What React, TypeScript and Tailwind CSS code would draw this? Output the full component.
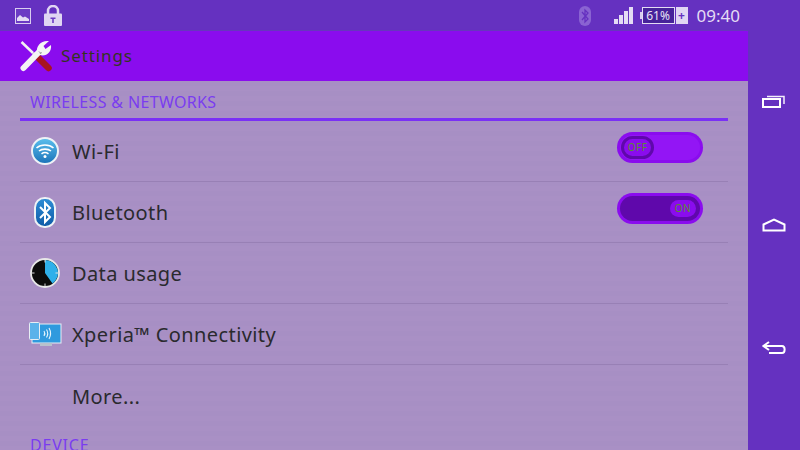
import React from "react";

const font = { fontFamily: '"Noto Sans", sans-serif' };

function Tools() {
  return (
    <svg width="32" height="32" viewBox="0 0 32 32">
      <path d="M1.500 2 L13 13" stroke="#f2f2f2" strokeWidth="2.500" fill="none" />
      <path d="M13 13 L18 18" stroke="#d8d8d8" strokeWidth="3" fill="none" />
      <path d="M18 17.500 L28.500 28" stroke="#a81420" strokeWidth="6.500" strokeLinecap="round" fill="none" />
      <path d="M3.500 28 L20 11" stroke="#f4f4f4" strokeWidth="6" strokeLinecap="round" fill="none" />
      <path d="M17 12 C16 6 21 0 29 1 L23.500 6 L25.500 9 L31 5 C32 12 26 17 20 15 Z" fill="#f4f4f4" />
      <path d="M19 11.500 L21 13.500 M20 14 L21.500 12" stroke="#9a9a9a" strokeWidth="1" />
    </svg>
  );
}

function PictureIcon() {
  return (
    <svg width="16" height="16" viewBox="0 0 16 16">
      <rect x="0.500" y="0.500" width="15" height="15" fill="#6b3bc4" stroke="#d9cdf0" />
      <path d="M2 13 V10 L5 7 L8 9.500 L10 8.500 L14 11 V13 Z" fill="#e4dcf4" />
    </svg>
  );
}

function LockIcon() {
  return (
    <svg width="18" height="21" viewBox="0 0 18 21">
      <path d="M4 9 V6 a5 5 0 0 1 10 0 V9" fill="none" stroke="#e0d6f3" strokeWidth="2.500" />
      <rect x="0" y="8.500" width="18" height="12.500" rx="1" fill="#e0d6f3" />
      <path d="M6.500 12.500 H11.500 V14 H9.800 V18 H8.200 V14 H6.500 Z" fill="#6b3bc4" />
    </svg>
  );
}

function BtStatus() {
  return (
    <svg width="12" height="20" viewBox="0 0 12 20">
      <rect width="12" height="20" rx="6" fill="#8a63d2" />
      <path d="M3 6 L9 13 L6 16 V4 L9 7 L3 14" fill="none" stroke="#6531c0" strokeWidth="1.300" />
    </svg>
  );
}

function Signal() {
  return (
    <svg width="20" height="17" viewBox="0 0 20 17">
      <path d="M0 12 H4 V17 H0 Z M5 8 H9 V17 H5 Z M10 4 H14 V17 H10 Z M15 0 H19 V17 H15 Z" fill="#e4dcf4" />
    </svg>
  );
}

function Battery() {
  return (
    <div className="flex items-center">
      <div className="w-[2px] h-[7px] bg-[#d9cdf0]" />
      <div className="w-[33px] h-[17px] border border-[#e4dcf4] bg-[#47239a] flex items-center justify-center text-[12px] leading-none text-[#e8e2f6]">
        61%
      </div>
      <div className="ml-[1px] w-[12px] h-[17px] bg-[#e0d6f3] flex items-center justify-center text-[12px] leading-none text-[#6531c0] font-bold">
        +
      </div>
    </div>
  );
}

function WifiIcon() {
  return (
    <svg width="28" height="28" viewBox="0 0 28 28">
      <defs>
        <linearGradient id="wg" x1="0" y1="0" x2="0" y2="1">
          <stop offset="0" stopColor="#5cc0ee" />
          <stop offset="1" stopColor="#1a72b8" />
        </linearGradient>
      </defs>
      <circle cx="14" cy="14" r="13" fill="url(#wg)" stroke="#eef2f6" strokeWidth="2" />
      <path d="M5.500 11 C10 7 18 7 22.500 11 M8 14 C11 11.500 17 11.500 20 14 M10.500 16.800 C12.500 15.300 15.500 15.300 17.500 16.800" fill="none" stroke="#fff" strokeWidth="1.600" />
      <circle cx="14" cy="19.500" r="1.500" fill="#fff" />
    </svg>
  );
}

function BluetoothIcon() {
  return (
    <svg width="22" height="31" viewBox="0 0 22 31">
      <defs>
        <linearGradient id="bg" x1="0" y1="0" x2="0" y2="1">
          <stop offset="0" stopColor="#2f8ed6" />
          <stop offset="1" stopColor="#0d5aa6" />
        </linearGradient>
      </defs>
      <rect x="1" y="1" width="20" height="29" rx="9.500" fill="url(#bg)" stroke="#eef2f6" strokeWidth="2" />
      <path d="M6 10 L16 20 L11 25 V6 L16 11 L6 21" fill="none" stroke="#fff" strokeWidth="2" />
    </svg>
  );
}

function ClockIcon() {
  return (
    <svg width="30" height="30" viewBox="0 0 30 30">
      <circle cx="15" cy="15" r="14" fill="#0c0c0c" stroke="#e8e8e8" strokeWidth="1.800" />
      <path d="M15 15 V2 A13 13 0 0 1 22.500 25.600 Z" fill="#2fb0ea" />
      <path d="M15 2 V4.500 M15 25.500 V28 M2 15 H4.500 M25.500 15 H28" stroke="#ddd" strokeWidth="1" />
    </svg>
  );
}

function XperiaIcon() {
  return (
    <svg width="33" height="25" viewBox="0 0 33 25">
      <rect x="3" y="2" width="29" height="19" fill="#2f9ade" stroke="#e8eef4" />
      <rect x="11" y="21" width="12" height="3" fill="#b9c1cc" />
      <rect x="0.500" y="0.500" width="10" height="17" rx="1" fill="#5bb2ea" stroke="#e8eef4" />
      <path d="M15 9 C16 10.500 16 12.500 15 14 M17.500 7.500 C19 10 19 13 17.500 15.500 M20 6 C22 9.500 22 13.500 20 17" fill="none" stroke="#e6f4fc" strokeWidth="1.100" />
    </svg>
  );
}

function Row({ icon, label, children, last }: { icon?: React.ReactNode; label: string; children?: React.ReactNode; last?: boolean }) {
  return (
    <div className={`h-[61px] flex items-center relative ${last ? "" : "border-b border-[#9880b5]"}`}>
      <div className="w-[52px] pr-[2px] flex items-center justify-center shrink-0">{icon}</div>
      <div className="pt-[2px] text-[20px] text-[#2a2a2e] tracking-[0.4px]">{label}</div>
      {children}
    </div>
  );
}

function Toggle({ on }: { on?: boolean }) {
  return (
    <div className="absolute right-[25px] top-[11px] w-[86px] h-[31px] rounded-full bg-[#8a0cee] p-[3px]">
      <div className={`w-full h-full rounded-full flex items-center ${on ? "bg-[#5f08ab] justify-end" : "bg-[#9315f5] justify-start"}`}>
        {on ? (
          <div className="mr-[4px] w-[26px] h-[17px] rounded-full bg-[#8a0cee] text-[10px] tracking-[0.5px] flex items-center justify-center text-[#5d8a33]">ON</div>
        ) : (
          <div className="ml-[1px] w-[33px] h-[23px] rounded-full bg-[#8a0cee] border-[3px] border-[#5f08ab] text-[10px] tracking-[0.5px] flex items-center justify-center text-[#5d8a33]">OFF</div>
        )}
      </div>
    </div>
  );
}

export default function App() {
  return (
    <div style={font} className="w-[800px] h-[450px] overflow-hidden flex flex-col bg-[#6531c0]">
      <div className="h-[31px] shrink-0 flex items-center pl-[15px] pr-[60px] bg-[#6531c0]">
        <PictureIcon />
        <div className="ml-[13px] mb-[1px]"><LockIcon /></div>
        <div className="ml-auto flex items-center">
          <BtStatus />
          <div className="ml-[23px]"><Signal /></div>
          <div className="ml-[6px]"><Battery /></div>
          <div className="ml-[9px] text-[17px] leading-none text-[#e4dcf4]">09:40</div>
        </div>
      </div>
      <div className="flex-1 flex min-h-0">
        <div className="w-[748px] shrink-0 flex flex-col">
          <div className="h-[50px] shrink-0 bg-[#8a0cee] flex items-center pl-[20px] shadow-[0_1px_2px_#8f7aa8]">
            <Tools />
            <div className="ml-[9px] text-[17px] text-[#33351e] tracking-[0.9px]">Settings</div>
          </div>
          <div className="flex-1 min-h-0 overflow-hidden px-[20px] bg-[#a78fc4] bg-[repeating-linear-gradient(180deg,#a78fc4_0px,#a78fc4_5px,#a990c5_5px,#a990c5_10px)]">
            <div className="h-[40px] pt-[10px] pl-[10px] text-[16px] leading-[22px] text-[#7a3cf0] border-b-[3px] border-[#7a30f5] box-border tracking-[0.35px]">
              WIRELESS &amp; NETWORKS
            </div>
            <Row icon={<WifiIcon />} label="Wi-Fi"><Toggle /></Row>
            <Row icon={<BluetoothIcon />} label="Bluetooth"><Toggle on /></Row>
            <Row icon={<ClockIcon />} label="Data usage" />
            <Row icon={<XperiaIcon />} label="Xperia™ Connectivity" />
            <Row label="More..." last />
            <div className="pt-[8px] pl-[10px] text-[16px] leading-[22px] text-[#7a3cf0] tracking-[0.8px]">DEVICE</div>
          </div>
        </div>
        <div className="flex-1 flex flex-col items-center gap-[109px] pt-[64px] bg-[#6531c0]">
          <svg width="24" height="14" viewBox="0 0 24 14">
            <path d="M5 1.500 H22 V9" fill="none" stroke="#f2eefa" strokeWidth="1.500" />
            <rect x="1" y="4" width="17" height="8" fill="none" stroke="#fff" strokeWidth="2" />
          </svg>
          <svg width="24" height="14" viewBox="0 0 24 14">
            <path d="M1.500 12.500 V6.500 L12 1.500 L22.500 6.500 V12.500 Z" fill="none" stroke="#fff" strokeWidth="2" />
          </svg>
          <svg width="24" height="14" viewBox="0 0 24 14">
            <path d="M7 1 L1.500 5 L7 9 M2 5 H20 C23.500 5 23.500 12 20 12 H7" fill="none" stroke="#fff" strokeWidth="2" />
          </svg>
        </div>
      </div>
    </div>
  );
}
